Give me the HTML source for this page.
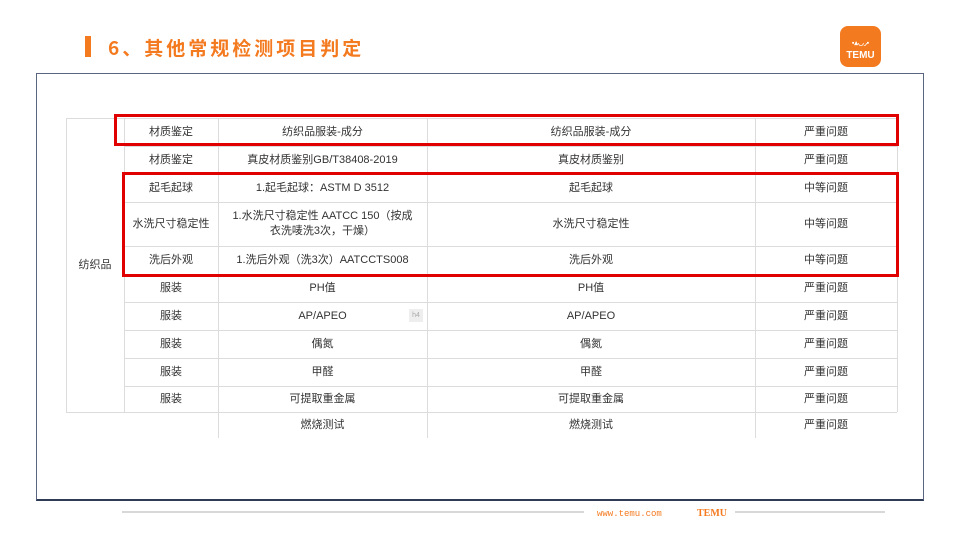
<!DOCTYPE html>
<html><head><meta charset="utf-8"><style>
*{margin:0;padding:0;box-sizing:border-box}
body{width:960px;height:540px;background:#fff;position:relative;overflow:hidden;font-family:"Liberation Sans","Noto Sans CJK SC",sans-serif;color:#333}
.a{position:absolute}
.c{position:absolute;display:flex;align-items:center;justify-content:center;text-align:center;font-size:11px;line-height:15px;color:#333}
.h{position:absolute;height:1px;background:#dcdcdc}
.v{position:absolute;width:1px;background:#dcdcdc}
.red{position:absolute;border:3px solid #e00000}
</style></head><body>
<div class="a" style="left:85px;top:36px;width:6px;height:21px;background:#f47a20"></div>
<div class="a" style="left:108px;top:36px;font-size:19px;font-weight:bold;color:#f47a20;letter-spacing:3px;line-height:24px;font-family:'Noto Sans CJK SC',sans-serif">6、其他常规检测项目判定</div>
<div class="a" style="left:840px;top:26px;width:41px;height:41px;background:#f47a20;border-radius:8px;color:#fff;text-align:center;font-weight:bold;line-height:10px;padding-top:10px"><span style="font-size:7px;letter-spacing:0">▪▴◡◞▪</span><br><span style="font-size:10px">TEMU</span></div>
<div class="a" style="left:36px;top:73px;width:888px;height:428px;border:1.5px solid #5a6580;border-bottom:2px solid #2f3a55"></div>

<div class="h" style="left:66px;top:118px;width:831px"></div>
<div class="h" style="left:124px;top:146px;width:773px"></div>
<div class="h" style="left:124px;top:174px;width:773px"></div>
<div class="h" style="left:124px;top:202px;width:773px"></div>
<div class="h" style="left:124px;top:246px;width:773px"></div>
<div class="h" style="left:124px;top:274px;width:773px"></div>
<div class="h" style="left:124px;top:302px;width:773px"></div>
<div class="h" style="left:124px;top:330px;width:773px"></div>
<div class="h" style="left:124px;top:358px;width:773px"></div>
<div class="h" style="left:124px;top:386px;width:773px"></div>
<div class="h" style="left:66px;top:412px;width:831px"></div>
<div class="v" style="left:66px;top:118px;height:294px"></div>
<div class="v" style="left:124px;top:118px;height:294px"></div>
<div class="v" style="left:218px;top:118px;height:320px"></div>
<div class="v" style="left:427px;top:118px;height:320px"></div>
<div class="v" style="left:755px;top:118px;height:320px"></div>
<div class="v" style="left:897px;top:118px;height:294px"></div>

<div class="c" style="left:66px;top:118px;width:58px;height:294px">纺织品</div>
<div class="c" style="left:124px;top:118px;width:94px;height:28px">材质鉴定</div>
<div class="c" style="left:218px;top:118px;width:209px;height:28px">纺织品服装-成分</div>
<div class="c" style="left:427px;top:118px;width:328px;height:28px">纺织品服装-成分</div>
<div class="c" style="left:755px;top:118px;width:142px;height:28px">严重问题</div>

<div class="c" style="left:124px;top:146px;width:94px;height:28px">材质鉴定</div>
<div class="c" style="left:218px;top:146px;width:209px;height:28px">真皮材质鉴别GB/T38408-2019</div>
<div class="c" style="left:427px;top:146px;width:328px;height:28px">真皮材质鉴别</div>
<div class="c" style="left:755px;top:146px;width:142px;height:28px">严重问题</div>

<div class="c" style="left:124px;top:174px;width:94px;height:28px">起毛起球</div>
<div class="c" style="left:218px;top:174px;width:209px;height:28px">1.起毛起球：ASTM D 3512</div>
<div class="c" style="left:427px;top:174px;width:328px;height:28px">起毛起球</div>
<div class="c" style="left:755px;top:174px;width:142px;height:28px">中等问题</div>

<div class="c" style="left:124px;top:202px;width:94px;height:44px">水洗尺寸稳定性</div>
<div class="c" style="left:218px;top:202px;width:209px;height:44px">1.水洗尺寸稳定性 AATCC 150（按成<br>衣洗唛洗3次，干燥）</div>
<div class="c" style="left:427px;top:202px;width:328px;height:44px">水洗尺寸稳定性</div>
<div class="c" style="left:755px;top:202px;width:142px;height:44px">中等问题</div>

<div class="c" style="left:124px;top:246px;width:94px;height:28px">洗后外观</div>
<div class="c" style="left:218px;top:246px;width:209px;height:28px">1.洗后外观（洗3次）AATCCTS008</div>
<div class="c" style="left:427px;top:246px;width:328px;height:28px">洗后外观</div>
<div class="c" style="left:755px;top:246px;width:142px;height:28px">中等问题</div>

<div class="c" style="left:124px;top:274px;width:94px;height:28px">服装</div>
<div class="c" style="left:218px;top:274px;width:209px;height:28px">PH值</div>
<div class="c" style="left:427px;top:274px;width:328px;height:28px">PH值</div>
<div class="c" style="left:755px;top:274px;width:142px;height:28px">严重问题</div>

<div class="c" style="left:124px;top:302px;width:94px;height:28px">服装</div>
<div class="c" style="left:218px;top:302px;width:209px;height:28px">AP/APEO</div>
<div class="a" style="left:409px;top:309px;width:14px;height:13px;background:#eee;color:#aaa;font-size:7px;text-align:center;line-height:13px">h4</div>
<div class="c" style="left:427px;top:302px;width:328px;height:28px">AP/APEO</div>
<div class="c" style="left:755px;top:302px;width:142px;height:28px">严重问题</div>

<div class="c" style="left:124px;top:330px;width:94px;height:28px">服装</div>
<div class="c" style="left:218px;top:330px;width:209px;height:28px">偶氮</div>
<div class="c" style="left:427px;top:330px;width:328px;height:28px">偶氮</div>
<div class="c" style="left:755px;top:330px;width:142px;height:28px">严重问题</div>

<div class="c" style="left:124px;top:358px;width:94px;height:28px">服装</div>
<div class="c" style="left:218px;top:358px;width:209px;height:28px">甲醛</div>
<div class="c" style="left:427px;top:358px;width:328px;height:28px">甲醛</div>
<div class="c" style="left:755px;top:358px;width:142px;height:28px">严重问题</div>

<div class="c" style="left:124px;top:386px;width:94px;height:26px">服装</div>
<div class="c" style="left:218px;top:386px;width:209px;height:26px">可提取重金属</div>
<div class="c" style="left:427px;top:386px;width:328px;height:26px">可提取重金属</div>
<div class="c" style="left:755px;top:386px;width:142px;height:26px">严重问题</div>

<div class="c" style="left:218px;top:412px;width:209px;height:26px">燃烧测试</div>
<div class="c" style="left:427px;top:412px;width:328px;height:26px">燃烧测试</div>
<div class="c" style="left:755px;top:412px;width:142px;height:26px">严重问题</div>

<div class="red" style="left:114px;top:114px;width:785px;height:32px"></div>
<div class="red" style="left:122px;top:172px;width:777px;height:105px"></div>

<div class="a" style="left:122px;top:511px;width:462px;height:2px;background:#d8d8d8"></div>
<div class="a" style="left:597px;top:509px;font-family:'Liberation Mono',monospace;font-size:9px;color:#f47a20">www.temu.com</div>
<div class="a" style="left:697px;top:508px;font-family:'Liberation Serif',serif;font-size:10px;font-weight:bold;color:#f47a20">TEMU</div>
<div class="a" style="left:735px;top:511px;width:150px;height:2px;background:#d8d8d8"></div>
</body></html>
